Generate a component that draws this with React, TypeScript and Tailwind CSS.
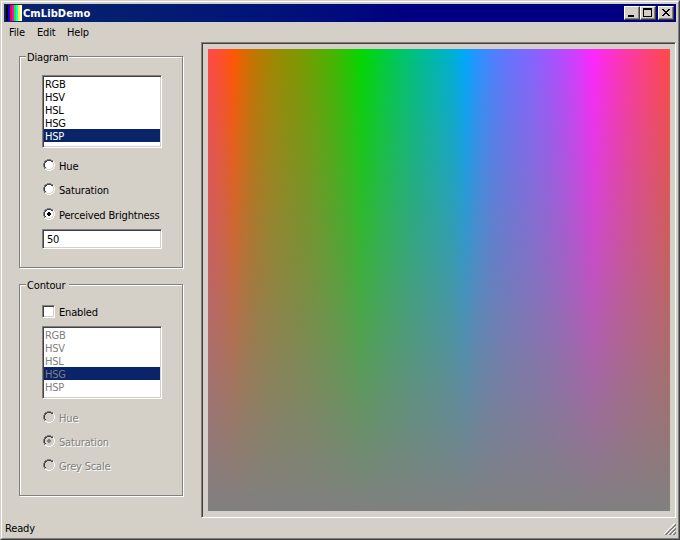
import { ReactNode } from "react";

const PIXELS: Record<string, string> = { G: "#808080", K: "#404040", L: "#d4d0c8", W: "#ffffff" };

const RADIO = [
  "    GGGG    ",
  "  GGKKKKGG  ",
  " GKK....KKW ",
  " GK......LW ",
  "GK........LW",
  "GK........LW",
  "GK........LW",
  "GK........LW",
  " GK......LW ",
  " GLL....LLW ",
  "  WWLLLLWW  ",
  "    WWWW    ",
];

function RadioMark({ checked, disabled }: { checked?: boolean; disabled?: boolean }) {
  const dot = disabled ? "#808080" : "#000000";
  return (
    <svg width="12" height="12" viewBox="0 0 12 12" shapeRendering="crispEdges" className="ml-px shrink-0">
      {RADIO.flatMap((row, y) =>
        [...row].map((c, x) =>
          c === " " ? null : (
            <rect key={`${x}-${y}`} x={x} y={y} width="1" height="1" fill={c === "." ? (disabled ? "#d4d0c8" : "#ffffff") : PIXELS[c]} />
          )
        )
      )}
      {checked && <path d="M5 4h2v1h1v2h-1v1h-2v-1h-1v-2h1z" fill={dot} />}
    </svg>
  );
}

function Radio({ label, checked, disabled }: { label: string; checked?: boolean; disabled?: boolean }) {
  return (
    <div className="flex h-3 items-start">
      <RadioMark checked={checked} disabled={disabled} />
      <span className={`ml-1 mt-px leading-[13px] ${disabled ? "text-[#808080] [text-shadow:1px_1px_0_#fff]" : ""}`}>{label}</span>
    </div>
  );
}

const SUNKEN =
  "border border-t-[#808080] border-l-[#808080] border-r-white border-b-white shadow-[inset_1px_1px_0_#404040,inset_-1px_-1px_0_#d4d0c8]";
const RAISED =
  "border border-t-white border-l-white border-r-[#404040] border-b-[#404040] shadow-[inset_-1px_-1px_0_#808080]";

function ListBox({ selected, disabled }: { selected: string; disabled?: boolean }) {
  return (
    <div className={`h-[73px] w-[120px] shrink-0 bg-white p-px tracking-[-0.3px] ${SUNKEN}`}>
      {["RGB", "HSV", "HSL", "HSG", "HSP"].map((m) => (
        <div
          key={m}
          className={`h-[13px] pl-px leading-[15px] ${m === selected ? "bg-[#0a246a]" : ""} ${
            disabled ? "text-[#808080]" : m === selected ? "text-white" : "text-black"
          }`}
        >
          {m}
        </div>
      ))}
    </div>
  );
}

function GroupBox({ title, children }: { title: string; children: ReactNode }) {
  return (
    <section className="flex h-[212px] w-[164px] shrink-0 flex-col border border-[#808080] pl-[22px] shadow-[1px_1px_0_#fff,inset_1px_1px_0_#fff]">
      <h2 className="-ml-4 -mt-[7px] h-[14px] w-[43px] shrink-0 bg-[#d4d0c8] pl-px leading-[16px]">{title}</h2>
      {children}
    </section>
  );
}

const LUMA = [0.299, 0.587, 0.114];

/** Most saturated colour of a hue whose perceived brightness is one half. */
function hueColor(hue: number): string {
  const pure = [0, 4, 2].map((o) => {
    const k = (hue / 60 + o) % 6;
    return Math.min(1, Math.max(0, Math.abs(k - 3) - 1));
  });
  const luma = pure.reduce((s, c, i) => s + c * LUMA[i], 0);
  const t = (0.5 - luma) / (1 - luma);
  const rgb = pure.map((c) => Math.round(255 * (luma >= 0.5 ? (c * 0.5) / luma : c + (1 - c) * t)));
  return `rgb(${rgb.join(",")})`;
}

const spectrum = Array.from({ length: 181 }, (_, i) => `${hueColor(i * 2)} ${((i * 100) / 180).toFixed(3)}%`).join(",");

const STRIPES = ["bg-black", "bg-[#0000ff]", "bg-[#ff0000]", "bg-[#ff00ff]", "bg-[#00ff00]", "bg-[#00ffff]", "bg-[#ffff00]", "bg-white"];

function TitleButton({ children }: { children: ReactNode }) {
  return (
    <button className={`h-[14px] w-4 bg-[#d4d0c8] ${RAISED}`}>
      <svg width="14" height="12" viewBox="0 0 14 12" shapeRendering="crispEdges" fill="#000" className="block">
        {children}
      </svg>
    </button>
  );
}

export default function App() {
  return (
    <div className="h-[540px] w-[680px] overflow-hidden border border-t-[#d4d0c8] border-l-[#d4d0c8] border-r-[#404040] border-b-[#404040] bg-[#d4d0c8] font-['DejaVu_Sans_Condensed','DejaVu_Sans',sans-serif] text-[11px] tracking-[-0.17px] text-black [font-stretch:condensed]">
      <div className="flex h-[538px] flex-col border border-t-white border-l-white border-r-[#808080] border-b-[#808080] p-[2px]">
        <header className="flex h-[18px] shrink-0 items-center bg-linear-to-r from-[#0a246a] to-[#000080] to-60% px-[2px]">
          <div className="flex h-4 w-4">
            {STRIPES.map((s) => (
              <i key={s} className={`w-[2px] ${s}`} />
            ))}
          </div>
          <h1 className="ml-[1px] pt-[2px] font-bold leading-[16px] tracking-[0.1px] text-white">CmLibDemo</h1>
          <div className="ml-auto flex">
            <TitleButton>
              <path d="M3 8h6v2h-6z" />
            </TitleButton>
            <TitleButton>
              <path fillRule="evenodd" d="M2 1h9v9h-9zM3 3v6h7v-6z" />
            </TitleButton>
            <div className="w-[2px]" />
            <TitleButton>
              <path d="M3 2h2v1h1v1h2v-1h1v-1h2v1h-1v1h-1v1h-1v1h1v1h1v1h1v1h-2v-1h-1v-1h-2v1h-1v1h-2v-1h1v-1h1v-1h1v-1h-1v-1h-1v-1h-1z" />
            </TitleButton>
          </div>
        </header>

        <nav className="flex h-5 shrink-0 pl-[5px] leading-[22px]">
          <span className="w-[28px]">File</span>
          <span className="w-[30px]">Edit</span>
          <span>Help</span>
        </nav>

        <main className="flex h-[476px] shrink-0">
          <aside className="flex w-[197px] shrink-0 flex-col gap-4 pl-[15px] pt-[14px]">
            <GroupBox title="Diagram">
              <div className="h-[11px] shrink-0" />
              <ListBox selected="HSP" />
              <div className="mt-[11px] flex flex-col">
                <Radio label="Hue" />
                <div className="h-3" />
                <Radio label="Saturation" />
                <div className="h-[13px]" />
                <Radio label="Perceived Brightness" checked />
              </div>
              <div className={`mt-[9px] h-5 w-[120px] bg-white pl-1 leading-[20px] ${SUNKEN}`}>50</div>
            </GroupBox>
            <GroupBox title="Contour">
              <div className="mt-[13px] flex h-[13px]">
                <span className={`h-[13px] w-[13px] bg-white ${SUNKEN}`} />
                <span className="ml-1 leading-[15px]">Enabled</span>
              </div>
              <div className="h-2 shrink-0" />
              <ListBox selected="HSG" disabled />
              <div className="mt-3 flex flex-col gap-3">
                <Radio label="Hue" disabled />
                <Radio label="Saturation" checked disabled />
                <Radio label="Grey Scale" disabled />
              </div>
            </GroupBox>
          </aside>
          <div className={`h-[476px] w-[475px] shrink-0 p-[6px] ${SUNKEN}`}>
            <div
              className="h-[462px] w-[462px]"
              style={{
                backgroundImage: `linear-gradient(to bottom, rgba(128,128,128,0), rgb(128,128,128)), linear-gradient(to right, ${spectrum})`,
              }}
            />
          </div>
        </main>

        <footer className="flex h-[18px] shrink-0 items-center justify-between pl-[1px]">
          <span className="pt-[3px] leading-[16px]">Ready</span>
          <svg width="12" height="12" viewBox="0 0 12 12" className="mt-[3px]" fill="none" shapeRendering="crispEdges">
            <path d="M0 11L11 0M4 11L11 4M8 11L11 8" stroke="#fff" />
            <path d="M1.5 12L12 1.5M5.5 12L12 5.5M9.5 12L12 9.5" stroke="#808080" strokeWidth="1.5" />
          </svg>
        </footer>
      </div>
    </div>
  );
}
